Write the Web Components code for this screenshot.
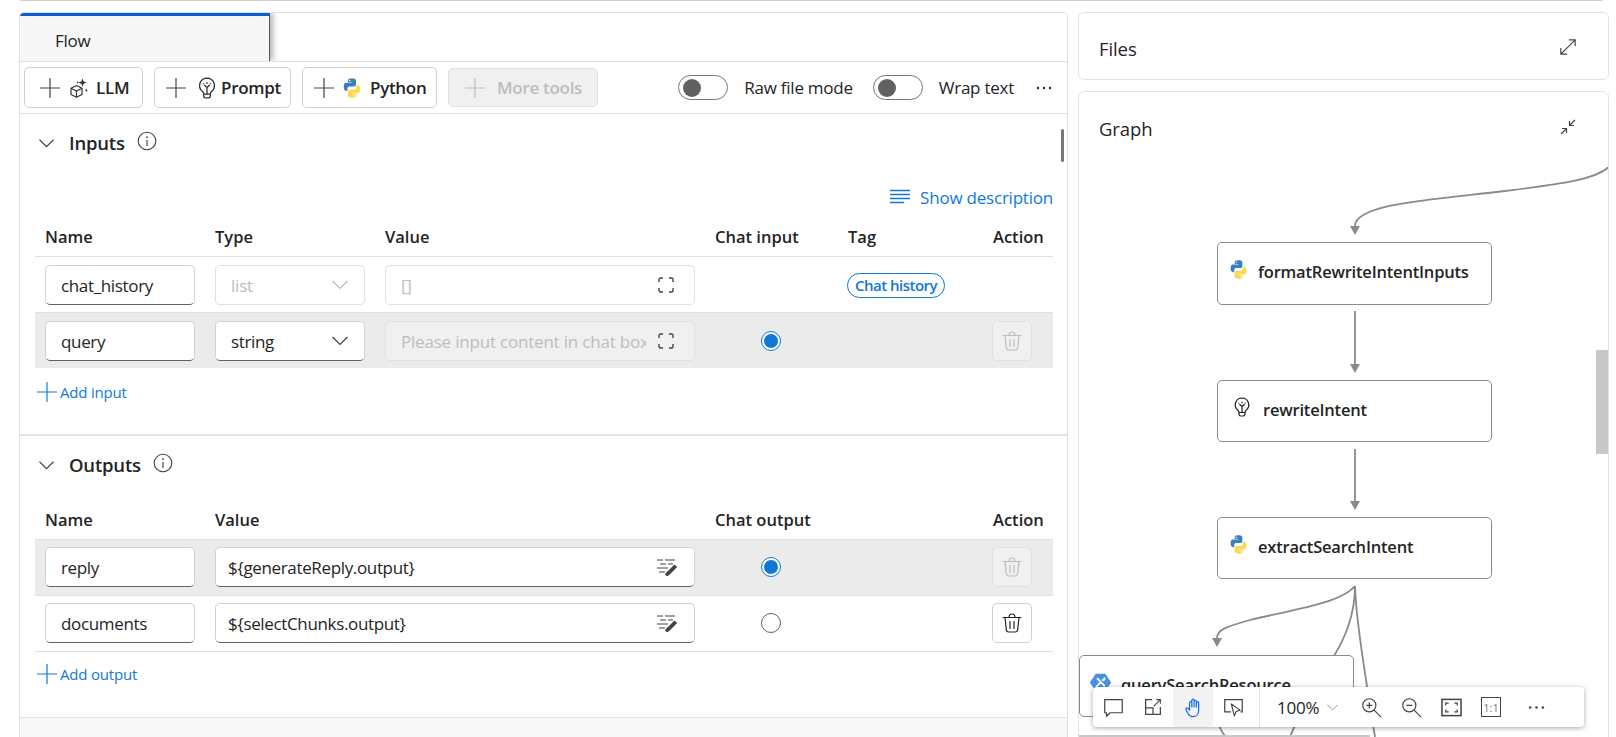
<!DOCTYPE html>
<html lang="en">
<head>
<meta charset="utf-8">
<title>Flow</title>
<style>
  html, body { margin: 0; background: #fff; }
  body { font-family: "Open Sans", "Liberation Sans", sans-serif; color: #242424; overflow: hidden; }
</style>
</head>
<body>
<flow-page>
  <flow-panel>
    <tool-button slot="tools" icon="cube" style="width:119px;--pad:15px;--icon-gap:8px;--text-gap:8px">LLM</tool-button>
    <tool-button slot="tools" icon="bulb" style="width:137px;--pad:11px;--icon-gap:10px;--text-gap:3px">Prompt</tool-button>
    <tool-button slot="tools" icon="python" style="width:135px;--pad:11px;--icon-gap:7px;--text-gap:7px">Python</tool-button>
    <tool-button slot="tools" disabled style="width:150px;--pad:16px;--icon-gap:12px;--text-gap:0">More tools</tool-button>

    <io-section heading="Inputs" divided style="--info-left:12px">
      <show-description slot="actions">Show description</show-description>
      <io-table cols="150px 150px 310px 113px 125px 1fr">
        <io-row slot="head" head><span>Name</span><span>Type</span><span>Value</span><span>Chat input</span><span>Tag</span><span>Action</span></io-row>
        <io-row>
          <io-field>chat_history</io-field>
          <io-field state="off" icon="chevron">list</io-field>
          <io-field state="off" icon="corners">[]</io-field>
          <span></span>
          <tag-pill>Chat history</tag-pill>
          <span></span>
        </io-row>
        <io-row selected>
          <io-field>query</io-field>
          <io-field icon="chevron">string</io-field>
          <io-field state="off" icon="corners">Please input content in chat box</io-field>
          <radio-dot checked></radio-dot>
          <span></span>
          <trash-button disabled></trash-button>
        </io-row>
      </io-table>
      <add-link slot="add">Add input</add-link>
    </io-section>

    <io-section heading="Outputs" style="--info-left:12px;--head-top:14px;--row-pad:7px 0 8px;--table-end:1px solid #e0e0e0;--add-top:11px">
      <io-table cols="150px 480px 258px 1fr">
        <io-row slot="head" head><span>Name</span><span>Value</span><span>Chat output</span><span>Action</span></io-row>
        <io-row selected>
          <io-field>reply</io-field>
          <io-field state="strong" icon="edit">${generateReply.output}</io-field>
          <radio-dot checked></radio-dot>
          <trash-button disabled></trash-button>
        </io-row>
        <io-row>
          <io-field>documents</io-field>
          <io-field state="strong" icon="edit">${selectChunks.output}</io-field>
          <radio-dot></radio-dot>
          <trash-button></trash-button>
        </io-row>
      </io-table>
      <add-link slot="add">Add output</add-link>
    </io-section>
  </flow-panel>

  <side-card slot="side" heading="Files" icon="grow" icon-size="18" style="height:66px;--card-head:-2px"></side-card>
  <side-card slot="side" heading="Graph" icon="shrink" icon-size="16" style="height:660px">
    <flow-graph>
      <graph-node style="left:138px;top:150px;height:61px;--pad:10px;--gap:9px" icon="python">formatRewriteIntentInputs</graph-node>
      <graph-node style="left:138px;top:288px;height:60px;--pad:14px;--gap:11px" icon="bulb">rewriteIntent</graph-node>
      <graph-node style="left:138px;top:425px;height:60px;--pad:10px;--gap:9px" icon="python">extractSearchIntent</graph-node>
      <graph-node style="left:0;top:563px;height:60px;--pad:10px;--gap:10px" icon="hex">querySearchResource</graph-node>
    </flow-graph>
    <graph-toolbar></graph-toolbar>
  </side-card>
</flow-page>

<script>
const PY = `<path fill="#3b7fbd" d="M11.9 1.5C7.3 1.5 7.6 3.5 7.6 3.5v2.2H12v.7H5.9S3 6 3 10.6s2.600 4.400 2.600 4.400h1.500v-2.100s-.1-2.600 2.500-2.600h4.400s2.400 0 2.400-2.400V3.900s.4-2.400-4.500-2.400zM9.500 2.900a.8.8 0 1 1 0 1.600.8.8 0 0 1 0-1.600z"/><path fill="#ffd84f" d="M12.100 22.500c4.600 0 4.300-2 4.300-2v-2.200H12v-.7h6.100s2.900.4 2.900-4.200-2.600-4.400-2.600-4.400h-1.500v2.100s.1 2.600-2.500 2.600H10s-2.400 0-2.400 2.400v3.900s-.4 2.500 4.500 2.500zm2.400-1.400a.8.8 0 1 1 0-1.600.8.8 0 0 1 0 1.600z"/>`;

const ICONS = {
  plus: [20, `<path d="M10 0v20M0 10h20" stroke="currentColor" stroke-width="1.2" fill="none"/>`],
  python: [24, PY],
  cube: [20, `<g fill="none" stroke="currentColor" stroke-width="1.2" stroke-linejoin="round"><path d="M8.500 7.500l5.500 2.700v6.300l-5.500 2.800-5.500-2.800v-6.300z"/><path d="M3 10.200l5.500 2.800 5.500-2.800M8.500 13v6.300"/></g><path fill="currentColor" d="M14.500.5l1.100 3 3 1.100-3 1.100-1.100 3-1.100-3-3-1.100 3-1.100zM18.300 10.500l.5 1.200 1.200.5-1.200.5-.5 1.200-.5-1.200-1.200-.5 1.200-.5zM9.500 3l.4 1 1 .4-1 .4-.4 1-.4-1-1-.4 1-.4z"/>`],
  bulb: [20, `<g fill="none" stroke="currentColor" stroke-width="1.200" stroke-linecap="round" stroke-linejoin="round"><path d="M10 1a6.800 6.800 0 0 0-4.300 12c.8.700 1.300 1.500 1.300 2.500h6c0-1 .5-1.800 1.300-2.500A6.800 6.800 0 0 0 10 1z"/><path d="M7 15.500v1.800c0 .9.700 1.700 1.700 1.700h2.600c1 0 1.700-.8 1.700-1.700v-1.800M10 15.500v-6M10 9.500L7.800 7.500M10 9.500l2.200-2M10 5.200v.6M6.800 6v.1M13.200 6v.1"/></g>`],
  hex: [24, `<path fill="#4a90e2" stroke="#4a90e2" stroke-width="2" stroke-linejoin="round" d="M7 3h10l6 9-6 9H7l-6-9z"/><path d="M8 7l9 9.500M7 17l5.500-5.500" stroke="#fff" stroke-width="2.200" fill="none"/><path d="M13 9.500l3.500-3.500 1.500 1.500-2 3z" fill="#fff"/>`],
  chevron: [14, `<path d="M.5 3.500L7 10l6.500-6.500" fill="none" stroke="currentColor" stroke-width="1.100"/>`],
  info: [20, `<circle cx="10" cy="10" r="8.800" fill="none" stroke="currentColor" stroke-width="1.100"/><path d="M10 9v6" stroke="currentColor" stroke-width="1.200"/><circle cx="10" cy="6.200" r=".9" fill="currentColor"/>`],
  lines: [22, `<path d="M1 4.500h20M1 8.500h20M1 12.500h20M1 16.500h14" stroke="currentColor" stroke-width="1.300" fill="none"/>`],
  corners: [16, `<path d="M1 5V2.500C1 1.700 1.700 1 2.500 1H5M11 1h2.500c.8 0 1.500.7 1.500 1.500V5M15 11v2.500c0 .8-.7 1.500-1.500 1.500H11M5 15H2.500C1.700 15 1 14.300 1 13.500V11" fill="none" stroke="currentColor" stroke-width="1.400"/>`],
  edit: [22, `<path d="M1 4h6M9 4h10M4 8h6M12 8h5M1 12h11M3 16h6" stroke="currentColor" stroke-width="1.100" fill="none"/><path fill="currentColor" d="M18.500 8.500l2.700 2.400-8.200 8.300c-1 .9-2.400 1-3.300.2-.6-.8-.4-2 .3-2.700z"/>`],
  trash: [20, `<g fill="none" stroke="currentColor" stroke-width="1.200" stroke-linecap="round" stroke-linejoin="round"><path d="M1 4.500h18M3 4.500l1.300 12.300c.1 1.200 1.100 2.200 2.400 2.200h6.600c1.300 0 2.300-1 2.400-2.200L17 4.500M7 4.500C7 2.500 8 1 10 1s3 1.500 3 3.500M8 8.500v7M12 8.500v7"/></g>`],
  grow: [20, `<path d="M2 18L18 2M11 2h7v7M2 11v7h7" fill="none" stroke="currentColor" stroke-width="1.300"/>`],
  shrink: [16, `<path d="M1 15l5-5M2 9.500h4.500V14M15 1l-5 5M14 6.500H9.500V2" fill="none" stroke="currentColor" stroke-width="1.200"/>`],
  comment: [24, `<path d="M2 3h20v15H8l-4 4v-4H2z" fill="none" stroke="currentColor" stroke-width="1.400" stroke-linejoin="round"/>`],
  popout: [22, `<path d="M10 2H2v18h18v-9M2 12h9v8" fill="none" stroke="currentColor" stroke-width="1.500"/><path d="M12 10l8-8M15 2h5v5" fill="none" stroke="currentColor" stroke-width="1.300"/>`],
  hand: [24, `<path d="M7.500 14V6.500a1.300 1.300 0 0 1 2.600 0V3.800a1.300 1.300 0 0 1 2.600 0v1.400a1.300 1.300 0 0 1 2.600 0v1.500a1.300 1.300 0 0 1 2.600 0V15c0 4.500-2.700 7.500-6.500 7.500-2.700 0-4.300-1.300-5.500-3.300L3.500 14.500c-.9-1.500 1-2.800 2.200-1.500l1.800 2zM10.100 6.500V12M12.700 5.200V12M15.300 6.700V12" fill="none" stroke="currentColor" stroke-width="1.400" stroke-linejoin="round"/>`],
  select: [24, `<path d="M9 17H2V3h20v14h-2" fill="none" stroke="currentColor" stroke-width="1.400"/><path d="M9.500 8l10 7-4.500 1.500-2 5z" fill="#fff" stroke="currentColor" stroke-width="1.300" stroke-linejoin="round"/>`],
  zoomin: [24, `<circle cx="9.500" cy="9.500" r="7.500" fill="none" stroke="currentColor" stroke-width="1.400"/><path d="M15 15l8 8M6 9.500h7M9.500 6v7" fill="none" stroke="currentColor" stroke-width="1.400"/>`],
  zoomout: [24, `<circle cx="9.500" cy="9.500" r="7.500" fill="none" stroke="currentColor" stroke-width="1.400"/><path d="M15 15l8 8M6 9.500h7" fill="none" stroke="currentColor" stroke-width="1.400"/>`],
  fit: [22, `<rect x="1" y="2.500" width="20" height="17" fill="none" stroke="currentColor" stroke-width="1.600"/><path d="M5 9V6.500h3M14 6.500h3V9M17 13v2.500h-3M8 15.500H5V13" fill="none" stroke="currentColor" stroke-width="1.300"/>`],
  dots: [16, `<circle cx="2" cy="8" r="1.200" fill="currentColor"/><circle cx="8" cy="8" r="1.200" fill="currentColor"/><circle cx="14" cy="8" r="1.200" fill="currentColor"/>`]
};

class UiIcon extends HTMLElement {
  constructor() {
    super();
    this.attachShadow({ mode: "open" });
  }
  connectedCallback() {
    const [box, body] = ICONS[this.getAttribute("name")] || ICONS.plus;
    const size = this.getAttribute("size") || box;
    this.shadowRoot.innerHTML = `<style>:host{display:inline-flex;flex:none}svg{display:block}</style>
      <svg width="${size}" height="${size}" viewBox="0 0 ${box} ${box}">${body}</svg>`;
  }
}
customElements.define("ui-icon", UiIcon);

class FlowPage extends HTMLElement {
  constructor() {
    super();
    this.attachShadow({ mode: "open" }).innerHTML = `<style>
      :host { display: block; height: 737px; overflow: hidden; }
      .rule { height: 1px; background: #d2d2d2; margin: 0 13px 0 20px; }
      .cols { display: flex; gap: 10px; padding: 11px 0 0 19px; }
      .side { display: flex; flex-direction: column; gap: 11px; width: 531px; }
    </style>
    <div class="rule"></div>
    <div class="cols"><slot></slot><div class="side"><slot name="side"></slot></div></div>`;
  }
}
customElements.define("flow-page", FlowPage);

class FlowPanel extends HTMLElement {
  constructor() {
    super();
    this.attachShadow({ mode: "open" }).innerHTML = `<style>
      :host { display: block; position: relative; width: 1049px; height: 725px; box-sizing: border-box; border: 1px solid #e0e0e0; border-bottom: 0; border-radius: 5px 5px 0 0; background: #f8f8f8; overflow: hidden; }
      .tabs { height: 48px; background: #fff; border-bottom: 1px solid #e0e0e0; overflow: hidden; }
      .tab { box-sizing: border-box; width: 250px; height: 48px; background: #f7f7f7; border-top: 3px solid #0a5bd8; border-right: 1px solid #555; box-shadow: 3px 0 6px rgba(0,0,0,.3); padding-left: 35px; font-size: 17px; line-height: 50px; letter-spacing: -.3px; }
      .bar { height: 51px; background: #fff; border-bottom: 1px solid #e0e0e0; display: flex; align-items: center; padding: 0 15px 0 4px; gap: 11px; box-sizing: content-box; }
      .opts { margin-left: auto; display: flex; align-items: center; font-size: 17px; letter-spacing: -.25px; }
      .opts span { margin: 0 20px 0 16px; }
      .opts span.last { margin-right: 22px; }
      .scroll { position: absolute; top: 116px; right: 3px; width: 3px; height: 33px; border-radius: 2px; background: #777; }
    </style>
    <div class="tabs"><div class="tab">Flow</div></div>
    <div class="bar">
      <slot name="tools"></slot>
      <div class="opts">
        <toggle-switch></toggle-switch><span>Raw file mode</span>
        <toggle-switch></toggle-switch><span class="last">Wrap text</span>
        <ui-icon name="dots"></ui-icon>
      </div>
    </div>
    <slot></slot>
    <div class="scroll"></div>`;
  }
}
customElements.define("flow-panel", FlowPanel);

class ToolButton extends HTMLElement {
  constructor() {
    super();
    this.attachShadow({ mode: "open" }).innerHTML = `<style>
      :host { display: flex; align-items: center; box-sizing: border-box; height: 41px; padding-left: var(--pad); border: 1px solid #d1d1d1; border-radius: 5px; background: #fff; color: #242424; font-size: 17px; font-weight: 600; letter-spacing: -.3px; flex: none; white-space: nowrap; }
      :host([disabled]) { height: 39px; background: #f0f0f0; border-color: #e0e0e0; color: #bdbdbd; }
      .plus { margin-right: var(--icon-gap); color: #444; }
      :host([disabled]) .plus { color: #bdbdbd; }
      .kind { margin-right: var(--text-gap); color: #333; display: inline-flex; }
    </style>
    <ui-icon class="plus" name="plus"></ui-icon><span class="kind"></span><slot></slot>`;
  }
  connectedCallback() {
    const icon = this.getAttribute("icon");
    const sizes = { python: 22, bulb: 22 };
    if (icon) this.shadowRoot.querySelector(".kind").innerHTML = `<ui-icon name="${icon}" size="${sizes[icon] || 20}"></ui-icon>`;
  }
}
customElements.define("tool-button", ToolButton);

class ToggleSwitch extends HTMLElement {
  constructor() {
    super();
    this.attachShadow({ mode: "open" }).innerHTML = `<style>
      :host { display: flex; align-items: center; box-sizing: border-box; width: 50px; height: 25px; padding-left: 4px; border: 1px solid #777; border-radius: 13px; background: #fff; }
      i { width: 18px; height: 18px; border-radius: 50%; background: #616161; }
    </style><i></i>`;
  }
}
customElements.define("toggle-switch", ToggleSwitch);

class IoSection extends HTMLElement {
  constructor() {
    super();
    this.attachShadow({ mode: "open" }).innerHTML = `<style>
      :host { display: block; background: #fff; }
      :host([divided]) { border-bottom: 2px solid #e3e3e3; padding-bottom: 30px; }
      :host(:not([divided])) { padding-bottom: 31px; border-bottom: 1px solid #e3e3e3; }
      header { display: flex; align-items: center; height: 26px; padding: 16px 0 0 19px; font-size: 18.500px; font-weight: 600; letter-spacing: -.2px; }
      .title { margin-top: -2px; }
      .arrow { margin-right: 15px; color: #444; }
      .info { margin: -4px 0 0 var(--info-left); color: #444; }
      ::slotted([slot=actions]) { margin: 30px 0 1px; }
    </style>
    <header><ui-icon class="arrow" name="chevron" size="15"></ui-icon><span class="title"></span><ui-icon class="info" name="info"></ui-icon></header>
    <slot name="actions"></slot>
    <slot></slot>
    <slot name="add"></slot>`;
  }
  connectedCallback() {
    this.shadowRoot.querySelector(".title").textContent = this.getAttribute("heading");
  }
}
customElements.define("io-section", IoSection);

class ShowDescription extends HTMLElement {
  constructor() {
    super();
    this.attachShadow({ mode: "open" }).innerHTML = `<style>
      :host { display: flex; justify-content: flex-end; align-items: center; gap: 9px; height: 22px; padding-right: 14px; color: #0f7ad8; font-size: 17px; letter-spacing: -.22px; }
    </style><ui-icon name="lines"></ui-icon><slot></slot>`;
  }
}
customElements.define("show-description", ShowDescription);

class IoTable extends HTMLElement {
  constructor() {
    super();
    this.attachShadow({ mode: "open" }).innerHTML = `<style>
      :host { display: block; margin: var(--head-top, 0) 14px 0 15px; border-bottom: var(--table-end, 0); }
    </style><slot name="head"></slot><slot></slot>`;
  }
  connectedCallback() {
    this.style.setProperty("--cols", this.getAttribute("cols"));
  }
}
customElements.define("io-table", IoTable);

class IoRow extends HTMLElement {
  constructor() {
    super();
    this.attachShadow({ mode: "open" }).innerHTML = `<style>
      :host { display: grid; grid-template-columns: var(--cols); column-gap: 20px; align-items: center; box-sizing: border-box; height: 56px; padding: var(--row-pad, 8px 0 7px) ; padding-left: 10px; border-top: 1px solid #e0e0e0; }
      :host([selected]) { background: #ebebeb; }
      :host([head]) { height: 47px; padding: 0 0 8px 10px; border-top: 0; align-items: end; font-size: 16.500px; font-weight: 600; line-height: 22px; letter-spacing: 0; white-space: nowrap; }
    </style><slot></slot>`;
  }
}
customElements.define("io-row", IoRow);

class IoField extends HTMLElement {
  constructor() {
    super();
    this.attachShadow({ mode: "open" }).innerHTML = `<style>
      :host { display: flex; align-items: center; gap: 12px; box-sizing: border-box; height: 40px; padding: 0 15px; border: 1px solid #d1d1d1; border-bottom-color: #616161; border-radius: 5px; background: #fff; font-size: 17px; letter-spacing: -.35px; color: #242424; min-width: 0; }
      :host([state=off]) { border-color: #e0e0e0; color: #bdbdbd; letter-spacing: -.2px; }
      :host([state=strong]) { padding-left: 12px; }
      .text { flex: 1; min-width: 0; overflow: hidden; white-space: nowrap; padding-top: 1px; }
      .end { display: flex; }
      ui-icon { color: #444; }
      :host([icon=chevron]) { padding-right: 16px; }
      :host([icon=corners]) { padding-right: 20px; }
      :host([icon=edit]) { padding-right: 16px; }
      :host([state=off][icon=chevron]) ui-icon { color: #bdbdbd; }
    </style><span class="text"><slot></slot></span><span class="end"></span>`;
  }
  connectedCallback() {
    const icon = this.getAttribute("icon");
    const size = icon === "chevron" ? ' size="16"' : "";
    if (icon) this.shadowRoot.querySelector(".end").innerHTML = `<ui-icon name="${icon}"${size}></ui-icon>`;
    if (icon === "corners" && this.closest("io-row[selected]")) this.style.background = "#f0f0f0";
  }
}
customElements.define("io-field", IoField);

class TagPill extends HTMLElement {
  constructor() {
    super();
    this.attachShadow({ mode: "open" }).innerHTML = `<style>
      :host { display: inline-flex; justify-self: start; align-items: center; justify-content: center; box-sizing: border-box; width: 98px; height: 25px; margin-left: -1px; border: 1px solid #0f78d4; border-radius: 13px; color: #0f78d4; font-size: 15px; font-weight: 600; letter-spacing: -.5px; }
    </style><slot></slot>`;
  }
}
customElements.define("tag-pill", TagPill);

class RadioDot extends HTMLElement {
  constructor() {
    super();
    this.attachShadow({ mode: "open" }).innerHTML = `<style>
      :host { display: flex; align-items: center; justify-content: center; box-sizing: border-box; width: 20px; height: 20px; margin-left: 46px; border: 1px solid #616161; border-radius: 50%; background: #fff; }
      :host([checked]) { border-color: #0f78d4; }
      :host([checked]) i { width: 14px; height: 14px; border-radius: 50%; background: #0f78d4; }
    </style><i></i>`;
  }
}
customElements.define("radio-dot", RadioDot);

class TrashButton extends HTMLElement {
  constructor() {
    super();
    this.attachShadow({ mode: "open" }).innerHTML = `<style>
      :host { display: flex; align-items: center; justify-content: center; box-sizing: border-box; width: 40px; height: 40px; margin-left: -1px; border: 1px solid #d1d1d1; border-radius: 5px; background: #fff; color: #242424; }
      :host([disabled]) { background: #f0f0f0; border-color: #e0e0e0; color: #bdbdbd; }
    </style><ui-icon name="trash"></ui-icon>`;
  }
}
customElements.define("trash-button", TrashButton);

class AddLink extends HTMLElement {
  constructor() {
    super();
    this.attachShadow({ mode: "open" }).innerHTML = `<style>
      :host { display: flex; align-items: center; gap: 3px; height: 22px; margin: var(--add-top, 13px) 0 1px 17px; color: #0f7ad8; font-size: 15px; letter-spacing: -.2px; }
    </style><ui-icon name="plus"></ui-icon><slot></slot>`;
  }
}
customElements.define("add-link", AddLink);

class SideCard extends HTMLElement {
  constructor() {
    super();
    this.attachShadow({ mode: "open" }).innerHTML = `<style>
      :host { display: block; position: relative; box-sizing: content-box; border: 1px solid #e3e3e3; border-radius: 6px; background: #fff; overflow: hidden; }
      header { display: flex; justify-content: space-between; align-items: center; height: 74px; padding: 0 31px 0 20px; margin-top: var(--card-head, -1px); font-size: 18.500px; letter-spacing: -.1px; }
      .end { display: flex; }
      ui-icon { color: #444; margin-top: -3px; }
    </style>
    <header><span class="title"></span><span class="end"></span></header>
    <slot></slot>`;
  }
  connectedCallback() {
    this.shadowRoot.querySelector(".title").textContent = this.getAttribute("heading");
    const size = this.getAttribute("icon-size") || 20;
    this.shadowRoot.querySelector(".end").innerHTML = `<ui-icon name="${this.getAttribute("icon")}" size="${size}"></ui-icon>`;
    if (size == 16) this.shadowRoot.querySelector(".end").style.marginRight = "1px";
  }
}
customElements.define("side-card", SideCard);

class FlowGraph extends HTMLElement {
  constructor() {
    super();
    this.attachShadow({ mode: "open" }).innerHTML = `<style>
      :host { position: absolute; inset: 0; display: block; }
      svg { position: absolute; left: 0; top: 0; }
      .bar-y { position: absolute; left: 517px; top: 258px; width: 12px; height: 104px; background: #c8c8c8; }
      .bar-x { position: absolute; left: 0; top: 643px; width: 291px; height: 3px; background: #c8c8c8; }
    </style>
    <svg width="530" height="645" viewBox="1079 92 530 645" fill="none" stroke="#8a8a8a" stroke-width="1.800">
      <path d="M1610 166C1596 180 1560 184 1505 191C1440 199 1355 203 1355 226"/>
      <path d="M1355 311V365M1355 449V502"/>
      <path d="M1355 586C1340 604 1290 610 1250 620C1225 627 1217 630 1217 638"/>
      <path d="M1355 586C1355 615 1345 640 1330 662C1315 690 1298 715 1290 737"/>
      <path d="M1355 586C1356 620 1366 680 1375 737"/>
      <path d="M1216 718C1219 727 1222 733 1226 737"/>
      <g fill="#8a8a8a" stroke="none">
        <path d="M1350 226h10l-5 9zM1350 364h10l-5 9zM1350 501h10l-5 9zM1212 638h10l-5 9z"/>
      </g>
    </svg>
    <slot></slot>
    <div class="bar-y"></div>
    <div class="bar-x"></div>`;
  }
}
customElements.define("flow-graph", FlowGraph);

class GraphNode extends HTMLElement {
  constructor() {
    super();
    this.attachShadow({ mode: "open" }).innerHTML = `<style>
      :host { position: absolute; display: flex; align-items: flex-start; gap: var(--gap); box-sizing: content-box; width: 273px; border: 1px solid #8a8a8a; border-radius: 5px; background: #fff; font-size: 16.500px; font-weight: 600; letter-spacing: -.2px; color: #242424; }
      .icon { margin: 16px 0 0 var(--pad); color: #222; }
      .text { margin-top: 18px; line-height: 22px; white-space: nowrap; }
    </style><span class="icon"></span><span class="text"><slot></slot></span>`;
  }
  connectedCallback() {
    const name = this.getAttribute("icon");
    this.shadowRoot.querySelector(".icon").innerHTML = `<ui-icon name="${name}" size="${name === "bulb" ? 20 : 21}"></ui-icon>`;
  }
}
customElements.define("graph-node", GraphNode);

class GraphToolbar extends HTMLElement {
  constructor() {
    super();
    const cell = (n, s, on) => `<span class="cell${on ? " on" : ""}"><ui-icon name="${n}" size="${s}"></ui-icon></span>`;
    this.attachShadow({ mode: "open" }).innerHTML = `<style>
      :host { position: absolute; left: 14px; top: 595px; display: flex; align-items: stretch; box-sizing: border-box; width: 491px; height: 40px; background: #fff; border-radius: 4px; box-shadow: 0 1px 5px rgba(0,0,0,.35); color: #444; }
      .cell { display: flex; align-items: center; justify-content: center; width: 40px; }
      .on { background: #f3f3f3; color: #0f6cf0; }
      .sep { width: 1px; background: #e6e6e6; margin-left: 6px; }
      .zoom { display: flex; align-items: center; width: 91px; padding-left: 17px; box-sizing: border-box; gap: 8px; font-size: 17px; letter-spacing: -.2px; color: #242424; }
      .zoom ui-icon { color: #888; }
      .one { box-sizing: border-box; display: flex; align-items: center; justify-content: center; width: 20px; height: 20px; border: 1.500px solid #444; color: #777; font-size: 11px; }
    </style>
    ${cell("comment", 21)}${cell("popout", 18)}${cell("hand", 21, true)}${cell("select", 21)}
    <span class="sep"></span>
    <span class="zoom"><span>100%</span><ui-icon name="chevron" size="11"></ui-icon></span>
    ${cell("zoomin", 21)}${cell("zoomout", 21)}${cell("fit", 21)}
    <span class="cell"><span class="one">1:1</span></span>
    <span class="cell" style="margin-left:5px"><ui-icon name="dots" size="17"></ui-icon></span>`;
  }
}
customElements.define("graph-toolbar", GraphToolbar);
</script>
</body>
</html>
